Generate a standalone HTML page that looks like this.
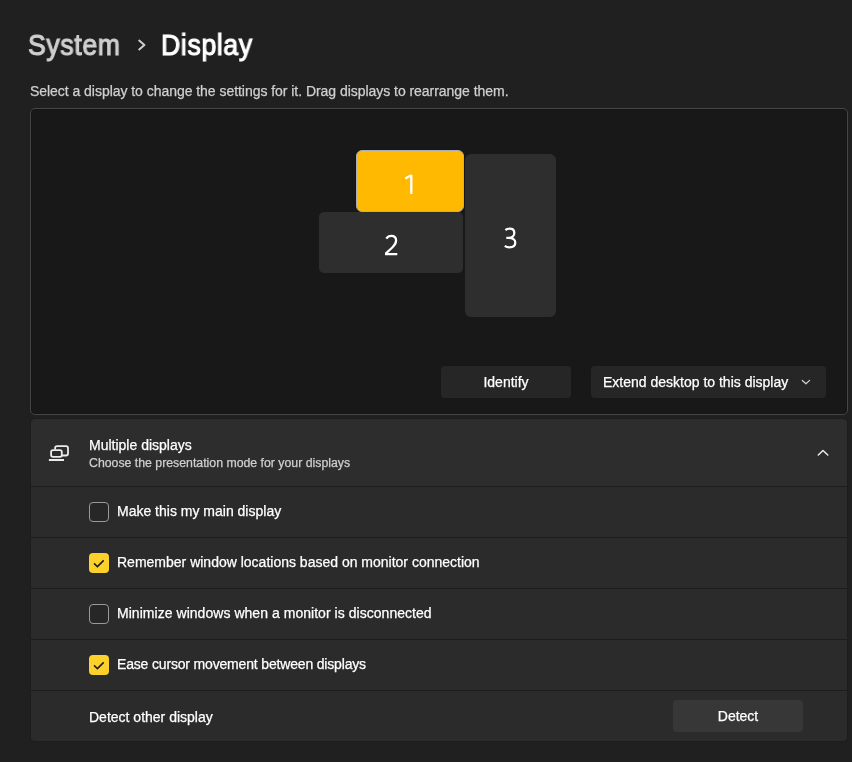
<!DOCTYPE html>
<html><head><meta charset="utf-8">
<style>
*{margin:0;padding:0;box-sizing:border-box}
html,body{width:852px;height:762px;overflow:hidden;background:#202020;font-family:"Liberation Sans",sans-serif;color:#fff}
.a{position:absolute}
.t{position:absolute;white-space:nowrap;line-height:14px;font-size:14px;will-change:transform;-webkit-text-stroke:0.25px currentColor}
#title1{left:28px;top:31px;font-size:28.6px;line-height:28px;font-weight:normal;-webkit-text-stroke:1.1px #cfcfcf;letter-spacing:0.7px;color:#cfcfcf;transform-origin:0 0;transform:scaleX(0.93)}
#title2{left:161px;top:31px;font-size:28.6px;line-height:28px;font-weight:normal;-webkit-text-stroke:1.1px #fff;letter-spacing:0.7px;color:#fff;transform-origin:0 0;transform:scaleX(0.93)}
#sub{left:30px;top:84px;color:#d0d0d0;letter-spacing:-0.04px}
#box{left:30px;top:108px;width:818px;height:307px;background:#181818;border:1px solid #464646;border-radius:5px;box-shadow:inset 0 0 0 1px #151515}
.mon{will-change:transform;position:absolute;border-radius:5px;background:#2e2e2e;color:#fff;font-size:28px;line-height:28px;display:flex;padding-top:7px;align-items:center;justify-content:center}
#m1{left:356px;top:150px;width:108px;height:62px;background:#ffb900;border:1.5px solid #abaeb3;border-radius:6px;box-shadow:0 0 0 0.6px #121212}
#m2{left:319px;top:212px;width:144px;height:61px}
#m3{left:465px;top:154px;width:91px;height:163px;border-radius:6px}
.btn{will-change:transform;-webkit-text-stroke:0.25px currentColor;position:absolute;height:32px;border-radius:4px;background:#262626;font-size:14px;line-height:32px;color:#fff;white-space:nowrap}
#identify{left:441px;top:366px;width:130px;text-align:center}
#extend{left:591px;top:366px;width:235px;padding-left:12px}
#card{left:30px;top:418px;width:818px;height:324px;background:#1d1d1d;border-radius:5px}
.row{position:absolute;left:31px;width:816px;background:#2b2b2b}
#hdr{top:419px;height:67px;background:#2d2d2d;border-radius:4px 4px 0 0}
#r1{top:487px;height:50px}
#r2{top:538px;height:50px}
#r3{top:589px;height:50px}
#r4{top:640px;height:50px}
#r5{top:691px;height:50px;border-radius:0 0 4px 4px}
.cb{position:absolute;left:89px;width:20px;height:20px;border-radius:4px;border:1px solid #9a9a9a;background:#272727}
.cb.on{background:#fcd12a;border:none}
#mdt{left:89px;top:438px}
#mds{left:89px;top:457px;font-size:12.3px;line-height:12px;color:#cfcfcf}
#detect{left:673px;top:700px;width:130px;background:#373737;text-align:center}
</style></head><body>
<div class="t" id="title1">System</div>
<svg class="a" style="left:136px;top:38px" width="12" height="14" viewBox="0 0 12 14"><path d="M3.2 2.6 L8.4 7 L3.2 11.4" fill="none" stroke="#cfcfcf" stroke-width="2" stroke-linecap="round" stroke-linejoin="round"/></svg>
<div class="t" id="title2">Display</div>
<div class="t" id="sub">Select a display to change the settings for it. Drag displays to rearrange them.</div>

<div class="a" id="box"></div>
<div class="mon" id="m1"></div>
<div class="mon" id="m2"></div>
<div class="mon" id="m3"></div>
<svg class="a" style="left:0;top:0" width="852" height="762" viewBox="0 0 852 762" fill="none" stroke="#fff" stroke-width="2.25">
<path d="M405.2 178.5 L411.3 175.3 V194" stroke-width="2.3" stroke-linejoin="bevel"/>
<path d="M386.3 238.6 C387.5 236.6 389.4 235.8 391.3 235.8 C394.3 235.8 396.1 237.8 396.1 240.6 C396.1 243.4 394.7 245.3 392.3 247.5 L386.1 253.2 V254.1 H397.3"/>
<path d="M505.4 230 C506.6 229.1 508.2 228.7 509.6 228.7 C512.4 228.7 514.3 230.4 514.3 233 C514.3 235.9 512.1 237.9 508.7 237.9 H506.3 M508.7 237.9 C512.7 237.9 515.3 239.9 515.3 242.7 C515.3 245.6 512.9 247.3 509.4 247.3 C507.6 247.3 506 246.8 504.8 245.8"/>
</svg>
<div class="btn" id="identify">Identify</div>
<div class="btn" id="extend">Extend desktop to this display<svg class="a" style="left:205px;top:6px" width="20" height="20" viewBox="0 0 20 20"><path d="M6.3 8.4 L10 11.8 L13.6 8.4" fill="none" stroke="#cdcdcd" stroke-width="1.3" stroke-linecap="round" stroke-linejoin="round"/></svg></div>

<div class="a" id="card"></div>
<div class="row" id="hdr"></div>
<div class="row" id="r1"></div>
<div class="row" id="r2"></div>
<div class="row" id="r3"></div>
<div class="row" id="r4"></div>
<div class="row" id="r5"></div>

<svg class="a" style="left:44px;top:440px" width="30" height="26" viewBox="0 0 30 26">
<path d="M11.1 9.6 V8.1 A2 2 0 0 1 13.1 6.1 H22 A2 2 0 0 1 24 8.1 V13.5 A2 2 0 0 1 22 15.5 H18" fill="none" stroke="#ececec" stroke-width="1.8"/>
<rect x="7.1" y="10.1" width="10.7" height="6.8" rx="1.9" fill="none" stroke="#ececec" stroke-width="1.8"/>
<rect x="4.9" y="19" width="15.1" height="2" fill="#ececec"/>
</svg>
<div class="t" id="mdt">Multiple displays</div>
<div class="t" id="mds">Choose the presentation mode for your displays</div>
<svg class="a" style="left:810px;top:442px" width="26" height="22" viewBox="0 0 26 22"><path d="M8.3 13 L13 8.5 L17.8 13" fill="none" stroke="#ededed" stroke-width="1.5" stroke-linecap="round" stroke-linejoin="round"/></svg>

<div class="cb" style="top:502px"></div>
<div class="t" id="t1" style="left:117px;top:504px">Make this my main display</div>
<div class="cb on" style="top:553px"><svg class="a" style="left:0;top:0" width="20" height="20" viewBox="0 0 20 20"><path d="M5 10.4 L8.4 13.6 L14.7 7.4" fill="none" stroke="#1a1a1a" stroke-width="1.5"/></svg></div>
<div class="t" id="t2" style="left:117px;top:555px">Remember window locations based on monitor connection</div>
<div class="cb" style="top:604px"></div>
<div class="t" id="t3" style="letter-spacing:0.04px;left:117px;top:606px">Minimize windows when a monitor is disconnected</div>
<div class="cb on" style="top:655px"><svg class="a" style="left:0;top:0" width="20" height="20" viewBox="0 0 20 20"><path d="M5 10.4 L8.4 13.6 L14.7 7.4" fill="none" stroke="#1a1a1a" stroke-width="1.5"/></svg></div>
<div class="t" id="t4" style="letter-spacing:-0.17px;left:117px;top:657px">Ease cursor movement between displays</div>
<div class="t" id="t5" style="left:89px;top:710px">Detect other display</div>
<div class="btn" id="detect">Detect</div>
</body></html>
